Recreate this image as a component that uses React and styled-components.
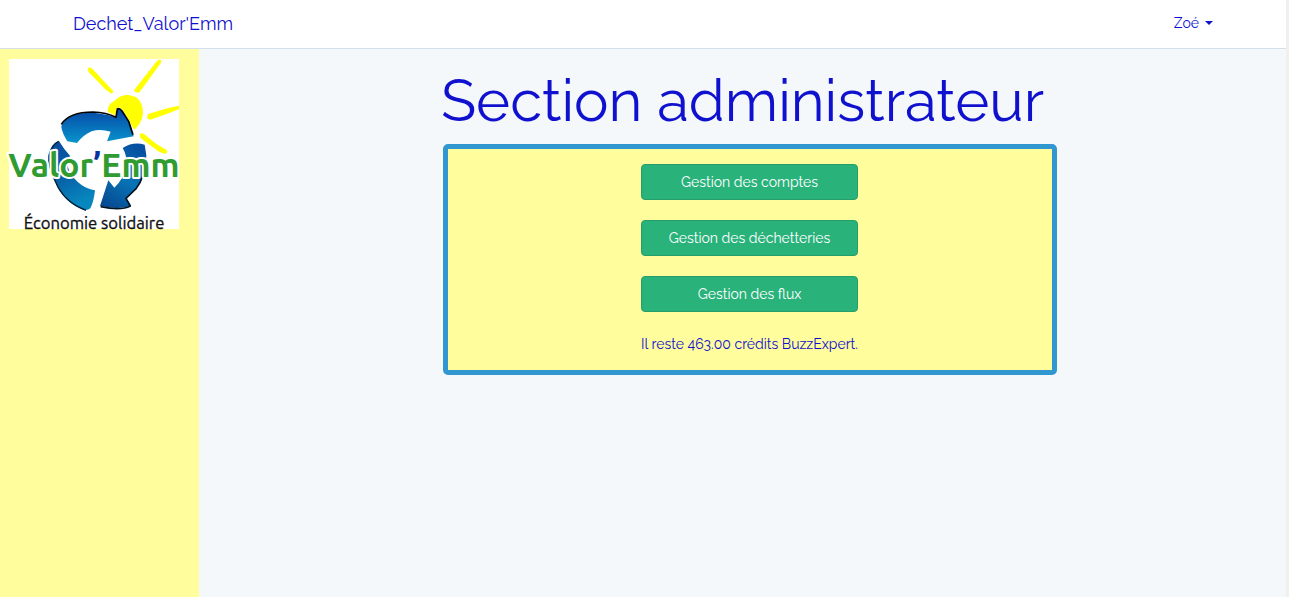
import React from "react";
import styled, { createGlobalStyle } from "styled-components";

const GlobalStyle = createGlobalStyle`
  * { box-sizing: border-box; }
  body {
    margin: 0;
    background: #f4f8fb;
    color: #1010cf;
    font-family: Raleway, Lato, sans-serif;
    font-size: 14px;
    line-height: 24px;
  }
`;

const Page = styled.div`
  display: flex;
  flex-direction: column;
  min-height: 100vh;
  border-right: 3px solid #f2f0ef;
`;

const Navbar = styled.header`
  border-bottom: 1px solid #d3e0e9;
  background: #fff;
`;

const NavInner = styled.div`
  display: flex;
  justify-content: space-between;
  align-items: center;
  max-width: 1170px;
  height: 48px;
  margin: 0 auto;
  padding: 0 15px;
`;

const Brand = styled.a`
  color: inherit;
  font-size: 18px;
  text-decoration: none;
`;

const UserMenu = styled.button`
  display: flex;
  align-items: center;
  gap: 6px;
  padding: 0 0 2px;
  border: 0;
  background: none;
  color: inherit;
  font: inherit;
  cursor: pointer;
`;

const Caret = styled.span`
  border-top: 4px solid;
  border-right: 4px solid transparent;
  border-left: 4px solid transparent;
`;

const Body = styled.div`
  display: flex;
  flex: 1;
`;

const Sidebar = styled.aside`
  flex: 0 0 199px;
  padding: 10px 9px;
  background: #fffd9c;
`;

const Logo = styled.svg`
  display: block;
  width: 170px;
  height: 170px;
  overflow: visible;
  background: #fff;
`;

const Main = styled.main`
  flex: 1;
  padding: 17px 0 16px;
`;

const Title = styled.h1`
  margin: 0 0 8px;
  font-size: 58px;
  font-weight: 400;
  line-height: 70px;
  text-align: center;
`;

const PanelRow = styled.div`
  display: flex;
  justify-content: center;
  padding-left: 14px;
`;

const Panel = styled.section`
  display: flex;
  flex-direction: column;
  align-items: center;
  gap: 20px;
  width: 100%;
  max-width: 614px;
  padding: 15px 15px 14px;
  border: 5px solid #3097d1;
  border-radius: 5px;
  background: #fffd9c;
`;

const ActionButton = styled.button`
  width: 217px;
  height: 36px;
  padding: 0 12px;
  border: 1px solid #259d6d;
  border-radius: 4px;
  background: #2ab27b;
  color: #fff;
  font: inherit;
  cursor: pointer;
`;

const Credits = styled.p`
  margin: 0;
`;

const ACTIONS = ["Gestion des comptes", "Gestion des déchetteries", "Gestion des flux"];

function ValorEmmLogo() {
  return (
    <Logo viewBox="27 57 510 510" role="img" aria-label="Valor'Emm, Économie solidaire">
      <defs>
        <linearGradient id="blueTop" x1="0" y1="0" x2="0" y2="1">
          <stop offset="0" stopColor="#0646a5" />
          <stop offset="1" stopColor="#0894cc" />
        </linearGradient>
        <linearGradient id="blueSide" x1="0" y1="0" x2="0.3" y2="1">
          <stop offset="0" stopColor="#0a4aa0" />
          <stop offset="0.6" stopColor="#0863a8" />
          <stop offset="1" stopColor="#0787bd" />
        </linearGradient>
        <linearGradient id="blueRight" x1="0.7" y1="0" x2="0.2" y2="1">
          <stop offset="0" stopColor="#0650a0" />
          <stop offset="0.5" stopColor="#0874b5" />
          <stop offset="1" stopColor="#064a92" />
        </linearGradient>
      </defs>
      <g fill="#ffff00">
        <path d="M264 84Q271 80 277 86L340 154Q340 161 332 160L316 148L265 95Z" />
        <path d="M471 63Q477 57 484 61L482 70L419 156Q404 161 402 151L407 144Z" />
        <path d="M444 222L505 204L537 197V207L508 219L451 239Q439 239 442 229Z" />
        <path d="M419 282Q427 277 436 285L468 311L499 329Q505 338 495 341L478 336L421 294Z" />
        <path d="M323 215Q322 192 343 183Q360 163 386 165L408 171Q429 188 429 218Q427 248 403 269L359 203L349 228Z" />
      </g>
      <path d="M184 262Q184 239 225 224Q275 209 348 232L352 207Q357 202 365 211L387 246L401 289L321 304L332 275Q300 266 275 274Q251 284 231 309L202 304Q187 280 184 262Z" fill="url(#blueTop)" stroke="#fff" strokeWidth="6" paintOrder="stroke" />
      <path d="M184 253Q207 216 279 216Q319 217 348 232L352 207Q358 203 366 213L386 244L399 284" fill="none" stroke="#000" strokeWidth="5" strokeLinejoin="round" />
      <path d="M177 303Q161 310 151 333Q141 360 164 420Q186 480 239 505Q260 515 271 505Q281 487 285 451Q239 444 209 397Q195 365 210 347Q193 330 177 303Z" fill="url(#blueSide)" />
      <path d="M176 304Q154 314 147 346Q143 379 166 424Q190 486 258 511" fill="none" stroke="#001d32" strokeWidth="4" />
      <path d="M368 324Q400 304 434 314L439 346Q438 380 423 424Q407 452 379 475L390 497Q363 510 300 498L325 421L343 443Q370 418 379 380Q382 346 368 324Z" fill="url(#blueRight)" />
      <path d="M437 357Q434 413 409 445L378 475L391 498Q363 513 302 500" fill="none" stroke="#001522" strokeWidth="5" strokeLinejoin="round" />
      <text x="25" y="411" fontFamily="Ubuntu, 'Noto Sans', sans-serif" fontSize="101" fontWeight="600" fill="#309b30" stroke="#fff" strokeWidth="12" strokeLinejoin="round" paintOrder="stroke">
        Valor<tspan fill="#0633a1">’</tspan>Emm
      </text>
      <text x="282" y="566" textAnchor="middle" fontFamily="Ubuntu, 'Noto Sans', sans-serif" fontSize="50" fill="#111" stroke="#111" strokeWidth="1">
        Économie solidaire
      </text>
    </Logo>
  );
}

export default function App() {
  return (
    <>
      <GlobalStyle />
      <Page>
        <Navbar>
          <NavInner>
            <Brand href="#">Dechet_Valor'Emm</Brand>
            <UserMenu type="button" aria-haspopup="true">
              Zoé <Caret />
            </UserMenu>
          </NavInner>
        </Navbar>
        <Body>
          <Sidebar>
            <ValorEmmLogo />
          </Sidebar>
          <Main>
            <Title>Section administrateur</Title>
            <PanelRow>
              <Panel>
                {ACTIONS.map((label) => (
                  <ActionButton key={label} type="button">{label}</ActionButton>
                ))}
                <Credits>Il reste 463.00 crédits BuzzExpert.</Credits>
              </Panel>
            </PanelRow>
          </Main>
        </Body>
      </Page>
    </>
  );
}
